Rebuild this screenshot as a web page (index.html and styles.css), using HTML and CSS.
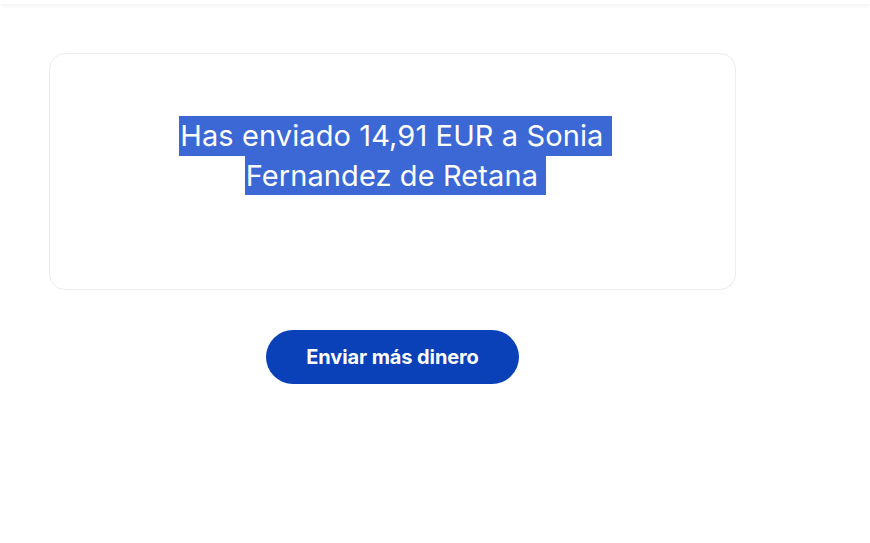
FILE: index.html
```html
<!DOCTYPE html>
<html lang="es">
<head>
<meta charset="utf-8">
<link rel="stylesheet" href="styles.css">
</head>
<body>
<div class="topbar"></div>
<main class="page">
  <section class="card">
    <h1 class="title"><span class="sel">Has enviado 14,91 EUR a Sonia&nbsp;</span><br><span class="sel">Fernandez de Retana&nbsp;</span></h1>
  </section>
  <div class="actions">
    <button class="btn">Enviar más dinero</button>
  </div>
</main>
</body>
</html>
```
FILE: styles.css
```css
html, body {
  margin: 0;
  padding: 0;
  background: #ffffff;
  font-family: Inter, "Noto Sans", sans-serif;
}
.topbar {
  height: 4px;
  background: #ffffff;
  box-shadow: 0 1px 5px rgba(0, 0, 0, 0.08);
}
.page {
  width: 687px;
  margin-left: 49px;
  padding-top: 49px;
}
.card {
  box-sizing: border-box;
  height: 237px;
  border: 1px solid #ececec;
  border-radius: 16px;
  display: flex;
  justify-content: center;
  padding-top: 62px;
}
.title {
  margin: 0 0 0 6px;
  text-align: center;
  font-size: 29px;
  font-weight: 400;
  line-height: 39.5px;
  color: #ffffff;
  letter-spacing: 0.1px;
}
.sel {
  display: inline-block;
  background: #3b68d4;
  padding-left: 1px;
}
.actions {
  display: flex;
  justify-content: center;
  padding-top: 40px;
}
.btn {
  width: 253px;
  height: 54px;
  border: none;
  border-radius: 27px;
  background: #0a40b8;
  color: #ffffff;
  font-family: Inter, sans-serif;
  font-weight: 700;
  font-size: 20px;
  letter-spacing: -0.1px;
}
```
